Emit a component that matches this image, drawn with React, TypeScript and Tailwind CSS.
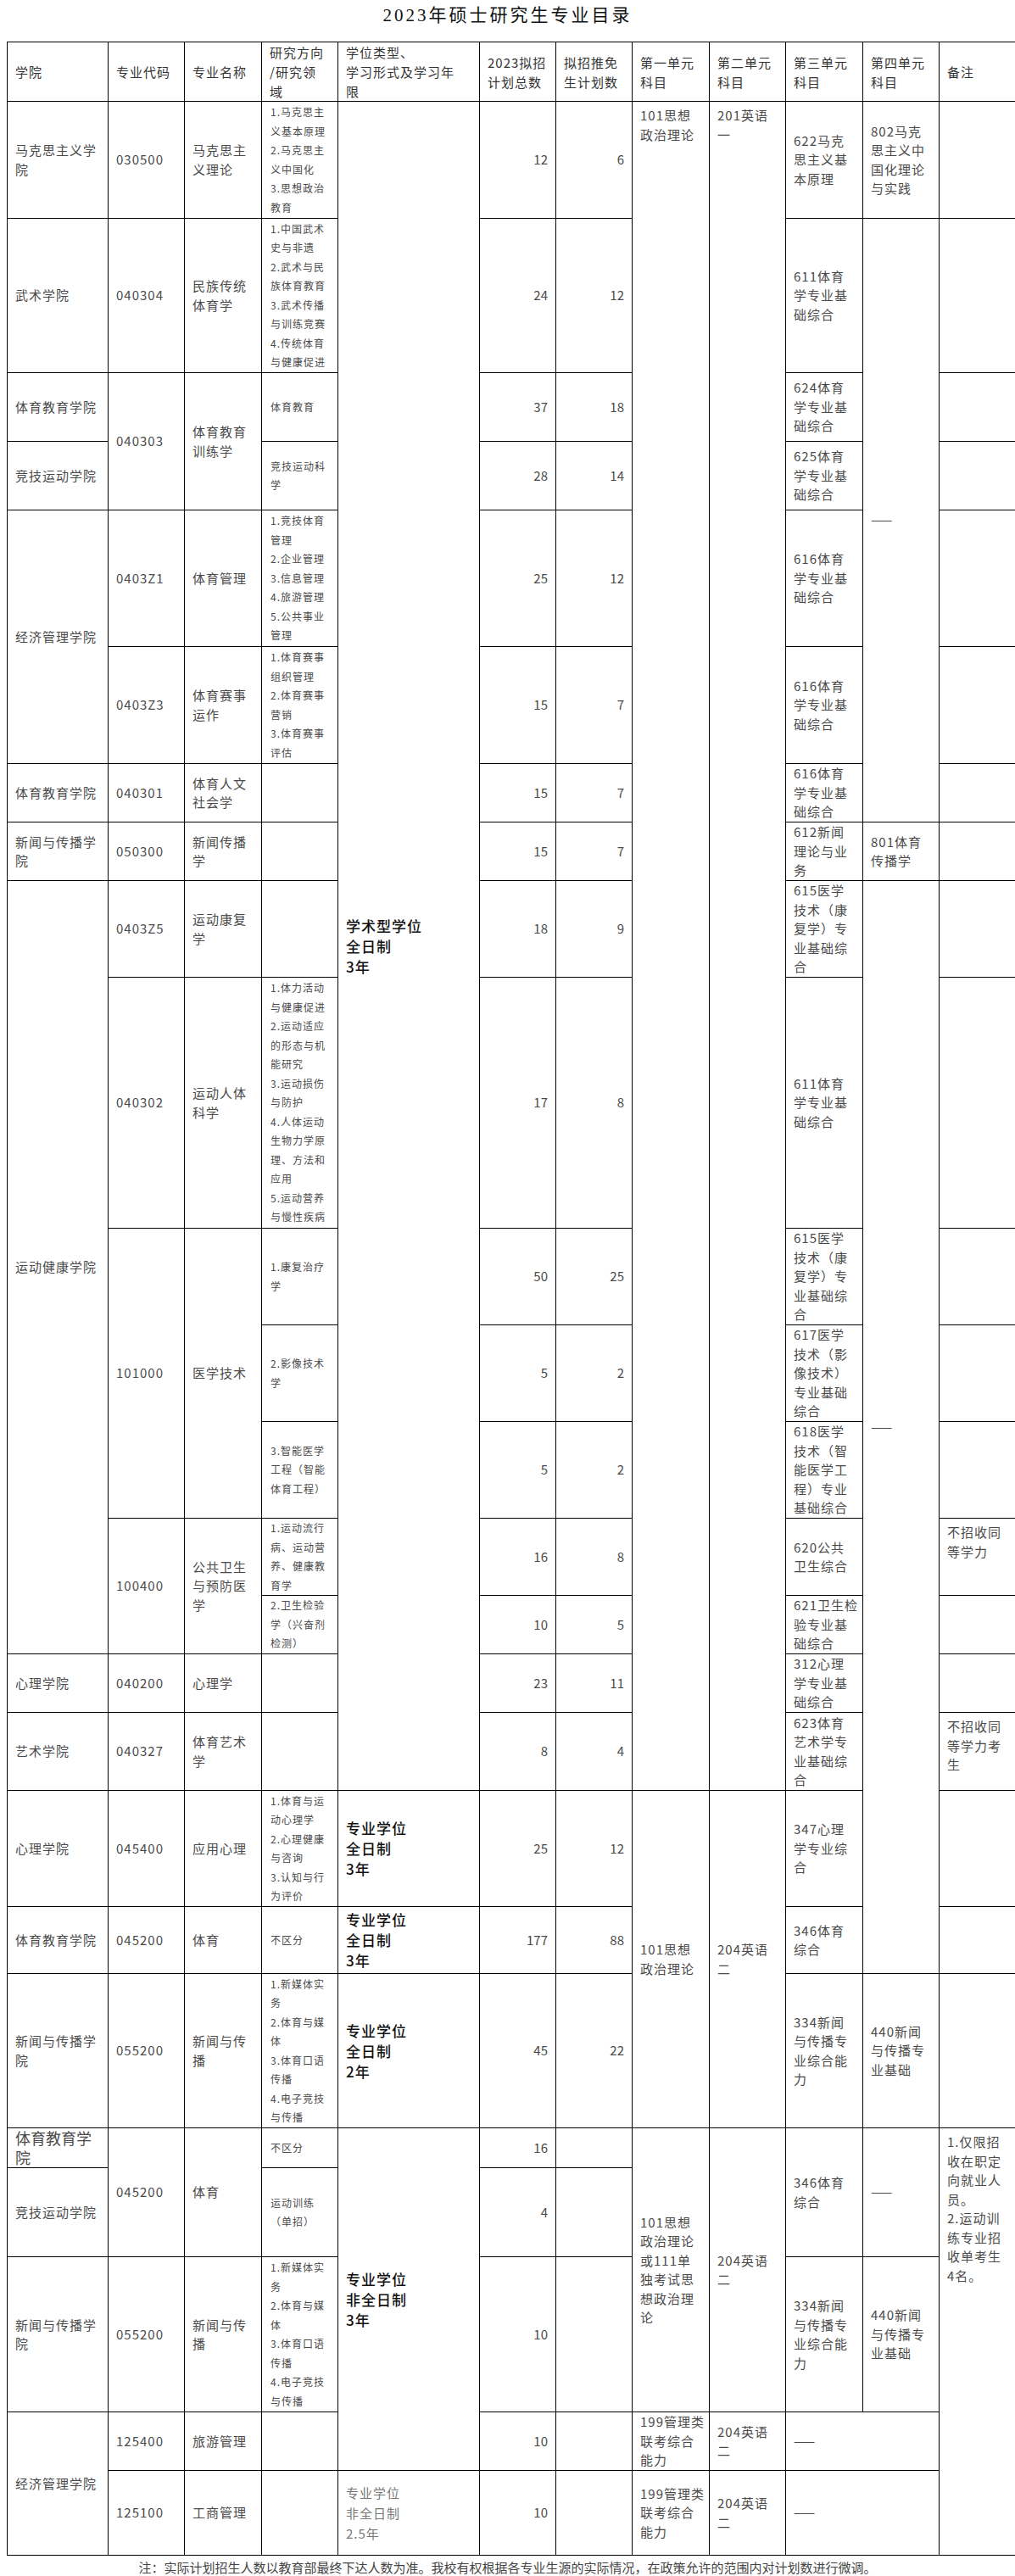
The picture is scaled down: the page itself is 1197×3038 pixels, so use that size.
type Kind = 'h' | 'm' | 's' | 'n' | 'd' | 'dl' | 't' | 'b';

type Cell = { t?: string; k?: Kind; rs?: number; cs?: number };
type Row = { h: string; cells: Cell[] };

const kindClass: Record<Kind, string> = {
  h: 'align-middle text-left px-[9px] text-[15px] leading-[23px] tracking-[1px] text-[#333]',
  m: 'align-middle text-left px-[9px] text-[15px] leading-[22.5px] tracking-[1px] text-[#4a4a4a]',
  s: 'align-middle text-left pl-[10px] pr-[2px] text-[12px] leading-[22.5px] tracking-[1px] text-[#4a4a4a]',
  n: 'align-middle text-right pr-[9px] text-[15px] text-[#4a4a4a]',
  d: 'align-middle text-left px-[9px] text-[17px] leading-[24px] tracking-[1px] text-[#111] font-medium',
  dl: 'align-middle text-left px-[9px] text-[15px] leading-[24px] tracking-[1px] text-[#777]',
  t: 'align-top text-left px-[9px] pt-[5px] text-[15px] leading-[22.5px] tracking-[1px] text-[#4a4a4a]',
  b: 'align-top text-left px-[9px] text-[18px] leading-[23px] text-[#4a4a4a]',
};

const colWidths = ['w-[119px]', 'w-[90px]', 'w-[91px]', 'w-[90px]', 'w-[167px]', 'w-[90px]', 'w-[90px]', 'w-[91px]', 'w-[90px]', 'w-[91px]', 'w-[90px]', 'w-[90px]'];

const xinwen = '1.新媒体实|务|2.体育与媒|体|3.体育口语|传播|4.电子竞技|与传播';

const rows: Row[] = [
  {
    h: 'h-[69px]',
    cells: [
      { t: '学院', k: 'h' },
      { t: '专业代码', k: 'h' },
      { t: '专业名称', k: 'h' },
      { t: '研究方向|/研究领|域', k: 'h' },
      { t: '学位类型、|学习形式及学习年|限', k: 'h' },
      { t: '2023拟招|计划总数', k: 'h' },
      { t: '拟招推免|生计划数', k: 'h' },
      { t: '第一单元|科目', k: 'h' },
      { t: '第二单元|科目', k: 'h' },
      { t: '第三单元|科目', k: 'h' },
      { t: '第四单元|科目', k: 'h' },
      { t: '备注', k: 'h' },
    ],
  },
  {
    h: 'h-[138px]',
    cells: [
      { t: '马克思主义学|院' },
      { t: '030500' },
      { t: '马克思主|义理论' },
      { t: '1.马克思主|义基本原理|2.马克思主|义中国化|3.思想政治|教育', k: 's' },
      { t: '学术型学位|全日制|3年', k: 'd', rs: 17 },
      { t: '12', k: 'n' },
      { t: '6', k: 'n' },
      { t: '101思想|政治理论', k: 't', rs: 17 },
      { t: '201英语|一', k: 't', rs: 17 },
      { t: '622马克|思主义基|本原理' },
      { t: '802马克|思主义中|国化理论|与实践' },
      {},
    ],
  },
  {
    h: 'h-[182px]',
    cells: [
      { t: '武术学院' },
      { t: '040304' },
      { t: '民族传统|体育学' },
      { t: '1.中国武术|史与非遗|2.武术与民|族体育教育|3.武术传播|与训练竞赛|4.传统体育|与健康促进', k: 's' },
      { t: '24', k: 'n' },
      { t: '12', k: 'n' },
      { t: '611体育|学专业基|础综合' },
      { t: '——', rs: 6 },
      {},
    ],
  },
  {
    h: 'h-[81px]',
    cells: [
      { t: '体育教育学院' },
      { t: '040303', rs: 2 },
      { t: '体育教育|训练学', rs: 2 },
      { t: '体育教育', k: 's' },
      { t: '37', k: 'n' },
      { t: '18', k: 'n' },
      { t: '624体育|学专业基|础综合' },
      {},
    ],
  },
  {
    h: 'h-[81px]',
    cells: [
      { t: '竞技运动学院' },
      { t: '竞技运动科|学', k: 's' },
      { t: '28', k: 'n' },
      { t: '14', k: 'n' },
      { t: '625体育|学专业基|础综合' },
      {},
    ],
  },
  {
    h: 'h-[161px]',
    cells: [
      { t: '经济管理学院', rs: 2 },
      { t: '0403Z1' },
      { t: '体育管理' },
      { t: '1.竞技体育|管理|2.企业管理|3.信息管理|4.旅游管理|5.公共事业|管理', k: 's' },
      { t: '25', k: 'n' },
      { t: '12', k: 'n' },
      { t: '616体育|学专业基|础综合' },
      {},
    ],
  },
  {
    h: 'h-[138px]',
    cells: [
      { t: '0403Z3' },
      { t: '体育赛事|运作' },
      { t: '1.体育赛事|组织管理|2.体育赛事|营销|3.体育赛事|评估', k: 's' },
      { t: '15', k: 'n' },
      { t: '7', k: 'n' },
      { t: '616体育|学专业基|础综合' },
      {},
    ],
  },
  {
    h: 'h-[69px]',
    cells: [
      { t: '体育教育学院' },
      { t: '040301' },
      { t: '体育人文|社会学' },
      {},
      { t: '15', k: 'n' },
      { t: '7', k: 'n' },
      { t: '616体育|学专业基|础综合' },
      {},
    ],
  },
  {
    h: 'h-[69px]',
    cells: [
      { t: '新闻与传播学|院' },
      { t: '050300' },
      { t: '新闻传播|学' },
      {},
      { t: '15', k: 'n' },
      { t: '7', k: 'n' },
      { t: '612新闻|理论与业|务' },
      { t: '801体育|传播学' },
      {},
    ],
  },
  {
    h: 'h-[114px]',
    cells: [
      { t: '运动健康学院', rs: 7 },
      { t: '0403Z5' },
      { t: '运动康复|学' },
      {},
      { t: '18', k: 'n' },
      { t: '9', k: 'n' },
      { t: '615医学|技术（康|复学）专|业基础综|合' },
      { t: '——', rs: 11 },
      {},
    ],
  },
  {
    h: 'h-[296px]',
    cells: [
      { t: '040302' },
      { t: '运动人体|科学' },
      {
        t: '1.体力活动|与健康促进|2.运动适应|的形态与机|能研究|3.运动损伤|与防护|4.人体运动|生物力学原|理、方法和|应用|5.运动营养|与慢性疾病',
        k: 's',
      },
      { t: '17', k: 'n' },
      { t: '8', k: 'n' },
      { t: '611体育|学专业基|础综合' },
      {},
    ],
  },
  {
    h: 'h-[114px]',
    cells: [
      { t: '101000', rs: 3 },
      { t: '医学技术', rs: 3 },
      { t: '1.康复治疗|学', k: 's' },
      { t: '50', k: 'n' },
      { t: '25', k: 'n' },
      { t: '615医学|技术（康|复学）专|业基础综|合' },
      {},
    ],
  },
  {
    h: 'h-[114px]',
    cells: [
      { t: '2.影像技术|学', k: 's' },
      { t: '5', k: 'n' },
      { t: '2', k: 'n' },
      { t: '617医学|技术（影|像技术）|专业基础|综合' },
      {},
    ],
  },
  {
    h: 'h-[114px]',
    cells: [
      { t: '3.智能医学|工程（智能|体育工程）', k: 's' },
      { t: '5', k: 'n' },
      { t: '2', k: 'n' },
      { t: '618医学|技术（智|能医学工|程）专业|基础综合' },
      {},
    ],
  },
  {
    h: 'h-[91px]',
    cells: [
      { t: '100400', rs: 2 },
      { t: '公共卫生|与预防医|学', rs: 2 },
      { t: '1.运动流行|病、运动营|养、健康教|育学', k: 's' },
      { t: '16', k: 'n' },
      { t: '8', k: 'n' },
      { t: '620公共|卫生综合' },
      { t: '不招收同|等学力', k: 't' },
    ],
  },
  {
    h: 'h-[69px]',
    cells: [
      { t: '2.卫生检验|学（兴奋剂|检测）', k: 's' },
      { t: '10', k: 'n' },
      { t: '5', k: 'n' },
      { t: '621卫生检|验专业基|础综合' },
      {},
    ],
  },
  {
    h: 'h-[69px]',
    cells: [
      { t: '心理学院' },
      { t: '040200' },
      { t: '心理学' },
      {},
      { t: '23', k: 'n' },
      { t: '11', k: 'n' },
      { t: '312心理|学专业基|础综合' },
      {},
    ],
  },
  {
    h: 'h-[92px]',
    cells: [
      { t: '艺术学院' },
      { t: '040327' },
      { t: '体育艺术|学' },
      {},
      { t: '8', k: 'n' },
      { t: '4', k: 'n' },
      { t: '623体育|艺术学专|业基础综|合' },
      { t: '不招收同|等学力考|生', k: 't' },
    ],
  },
  {
    h: 'h-[137px]',
    cells: [
      { t: '心理学院' },
      { t: '045400' },
      { t: '应用心理' },
      { t: '1.体育与运|动心理学|2.心理健康|与咨询|3.认知与行|为评价', k: 's' },
      { t: '专业学位|全日制|3年', k: 'd' },
      { t: '25', k: 'n' },
      { t: '12', k: 'n' },
      { t: '101思想|政治理论', rs: 3 },
      { t: '204英语|二', rs: 3 },
      { t: '347心理|学专业综|合' },
      {},
    ],
  },
  {
    h: 'h-[79px]',
    cells: [
      { t: '体育教育学院' },
      { t: '045200' },
      { t: '体育' },
      { t: '不区分', k: 's' },
      { t: '专业学位|全日制|3年', k: 'd' },
      { t: '177', k: 'n' },
      { t: '88', k: 'n' },
      { t: '346体育|综合' },
      {},
    ],
  },
  {
    h: 'h-[182px]',
    cells: [
      { t: '新闻与传播学|院' },
      { t: '055200' },
      { t: '新闻与传|播' },
      { t: xinwen, k: 's' },
      { t: '专业学位|全日制|2年', k: 'd' },
      { t: '45', k: 'n' },
      { t: '22', k: 'n' },
      { t: '334新闻|与传播专|业综合能|力' },
      { t: '440新闻|与传播专|业基础' },
      {},
    ],
  },
  {
    h: 'h-[47px]',
    cells: [
      { t: '体育教育学|院', k: 'b' },
      { t: '045200', rs: 2 },
      { t: '体育', rs: 2 },
      { t: '不区分', k: 's' },
      { t: '专业学位|非全日制|3年', k: 'd', rs: 4 },
      { t: '16', k: 'n' },
      {},
      { t: '101思想|政治理论|或111单|独考试思|想政治理|论', rs: 3 },
      { t: '204英语|二', rs: 3 },
      { t: '346体育|综合', rs: 2 },
      { t: '——', rs: 2 },
      { t: '1.仅限招|收在职定|向就业人|员。|2.运动训|练专业招|收单考生|4名。', k: 't', rs: 5 },
    ],
  },
  {
    h: 'h-[105px]',
    cells: [
      { t: '竞技运动学院' },
      { t: '运动训练|（单招）', k: 's' },
      { t: '4', k: 'n' },
      {},
    ],
  },
  {
    h: 'h-[183px]',
    cells: [
      { t: '新闻与传播学|院' },
      { t: '055200' },
      { t: '新闻与传|播' },
      { t: xinwen, k: 's' },
      { t: '10', k: 'n' },
      {},
      { t: '334新闻|与传播专|业综合能|力' },
      { t: '440新闻|与传播专|业基础' },
    ],
  },
  {
    h: 'h-[69px]',
    cells: [
      { t: '经济管理学院', rs: 2 },
      { t: '125400' },
      { t: '旅游管理' },
      {},
      { t: '10', k: 'n' },
      {},
      { t: '199管理类|联考综合|能力' },
      { t: '204英语|二' },
      { t: '——', cs: 2 },
    ],
  },
  {
    h: 'h-[100px]',
    cells: [
      { t: '125100' },
      { t: '工商管理' },
      {},
      { t: '专业学位|非全日制|2.5年', k: 'dl' },
      { t: '10', k: 'n' },
      {},
      { t: '199管理类|联考综合|能力' },
      { t: '204英语|二' },
      { t: '——', cs: 2 },
    ],
  },
];

function Lines({ t }: { t?: string }) {
  if (!t) return null;
  return (
    <>
      {t.split('|').map((l, i) => (
        <div key={i} className="whitespace-nowrap">
          {l}
        </div>
      ))}
    </>
  );
}

export default function App() {
  return (
    <div className="w-[1197px] bg-white font-['Noto_Sans_CJK_SC','Liberation_Sans',sans-serif]">
      <div className="h-[49px] pt-[5px] text-center text-[21px] leading-[26px] tracking-[3px] text-[#111] font-['Liberation_Serif','Noto_Sans_CJK_SC',serif]">
        2023年硕士研究生专业目录
      </div>

      <table className="ml-[8px] w-[1189px] table-fixed border-collapse">
        <colgroup>
          {colWidths.map((w, i) => (
            <col key={i} className={w} />
          ))}
        </colgroup>
        <tbody>
          {rows.map((row, ri) => (
            <tr key={ri} className={row.h}>
              {row.cells.map((c, ci) => (
                <td
                  key={ci}
                  rowSpan={c.rs}
                  colSpan={c.cs}
                  className={`border border-black p-0 ${kindClass[c.k ?? 'm']}`}
                >
                  <Lines t={c.t} />
                </td>
              ))}
            </tr>
          ))}
        </tbody>
      </table>

      <p className="mt-[3px] text-center text-[15px] leading-[22px] text-[#444]">
        注：实际计划招生人数以教育部最终下达人数为准。我校有权根据各专业生源的实际情况，在政策允许的范围内对计划数进行微调。
      </p>
    </div>
  );
}
